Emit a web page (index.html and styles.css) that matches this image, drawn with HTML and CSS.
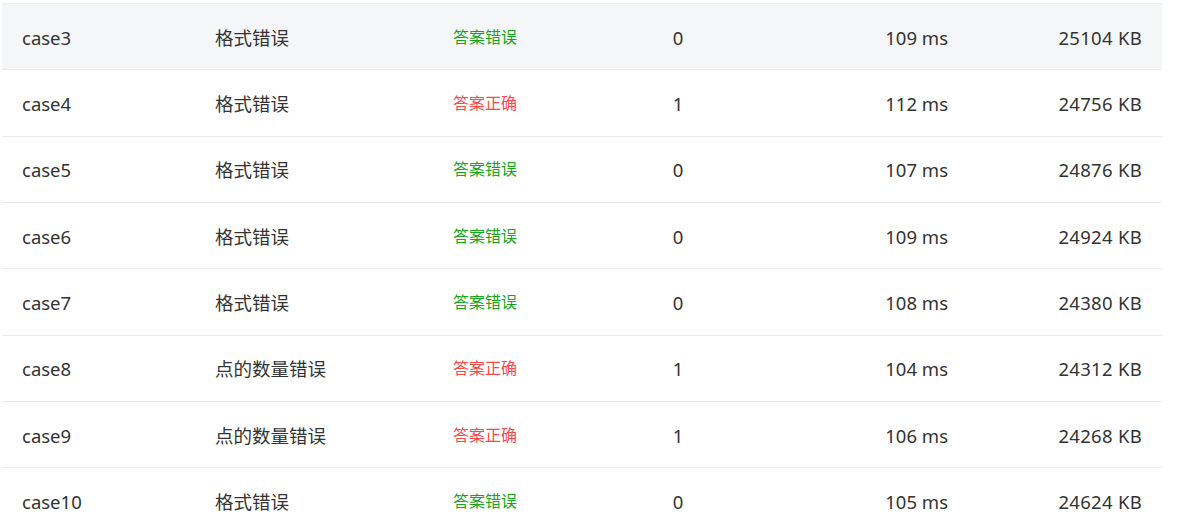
FILE: index.html
```html
<!DOCTYPE html>
<html lang="zh-CN">
<head>
<meta charset="utf-8">
<title>测试点结果</title>
<link rel="stylesheet" href="styles.css">
</head>
<body>
<div class="table">
  <div class="row hover">
    <div class="cell c1">case3</div><div class="cell c2">格式错误</div><div class="cell c3 wrong">答案错误</div><div class="cell c4">0</div><div class="cell c5">109 ms</div><div class="cell c6">25104 KB</div>
  </div>
  <div class="row">
    <div class="cell c1">case4</div><div class="cell c2">格式错误</div><div class="cell c3 right">答案正确</div><div class="cell c4">1</div><div class="cell c5">112 ms</div><div class="cell c6">24756 KB</div>
  </div>
  <div class="row">
    <div class="cell c1">case5</div><div class="cell c2">格式错误</div><div class="cell c3 wrong">答案错误</div><div class="cell c4">0</div><div class="cell c5">107 ms</div><div class="cell c6">24876 KB</div>
  </div>
  <div class="row">
    <div class="cell c1">case6</div><div class="cell c2">格式错误</div><div class="cell c3 wrong">答案错误</div><div class="cell c4">0</div><div class="cell c5">109 ms</div><div class="cell c6">24924 KB</div>
  </div>
  <div class="row">
    <div class="cell c1">case7</div><div class="cell c2">格式错误</div><div class="cell c3 wrong">答案错误</div><div class="cell c4">0</div><div class="cell c5">108 ms</div><div class="cell c6">24380 KB</div>
  </div>
  <div class="row">
    <div class="cell c1">case8</div><div class="cell c2">点的数量错误</div><div class="cell c3 right">答案正确</div><div class="cell c4">1</div><div class="cell c5">104 ms</div><div class="cell c6">24312 KB</div>
  </div>
  <div class="row">
    <div class="cell c1">case9</div><div class="cell c2">点的数量错误</div><div class="cell c3 right">答案正确</div><div class="cell c4">1</div><div class="cell c5">106 ms</div><div class="cell c6">24268 KB</div>
  </div>
  <div class="row">
    <div class="cell c1">case10</div><div class="cell c2">格式错误</div><div class="cell c3 wrong">答案错误</div><div class="cell c4">0</div><div class="cell c5">105 ms</div><div class="cell c6">24624 KB</div>
  </div>
</div>
</body>
</html>
```
FILE: styles.css
```css
html, body {
  margin: 0;
  padding: 0;
  background: #ffffff;
}
body {
  font-family: "Noto Sans", "Noto Sans CJK SC", sans-serif;
  color: #333333;
  font-size: 18.5px;
  overflow: hidden;
}
.table {
  width: 1160px;
  margin: 3px 0 0 2px;
  border-top: 1px solid #ebeef5;
}
.row {
  display: grid;
  grid-template-columns: 193px 238px 150px 190px 195px 194px;
  height: 66.33px;
  box-sizing: border-box;
  border-bottom: 1px solid #ebebeb;
  align-items: center;
  padding-top: 2px;
}
.row.hover {
  background: #f5f6f8;
}
.cell {
  white-space: nowrap;
  line-height: 24px;
}
.c1, .c2, .c3 {
  padding-left: 20px;
}
.c3 {
  font-size: 16px;
  padding-bottom: 2px;
}
.c4 {
  text-align: center;
}
.c5, .c6 {
  text-align: right;
  padding-right: 20px;
}
.c6 {
  letter-spacing: 0.3px;
}
.wrong {
  color: #17a51a;
}
.right {
  color: #fb4848;
}
```
